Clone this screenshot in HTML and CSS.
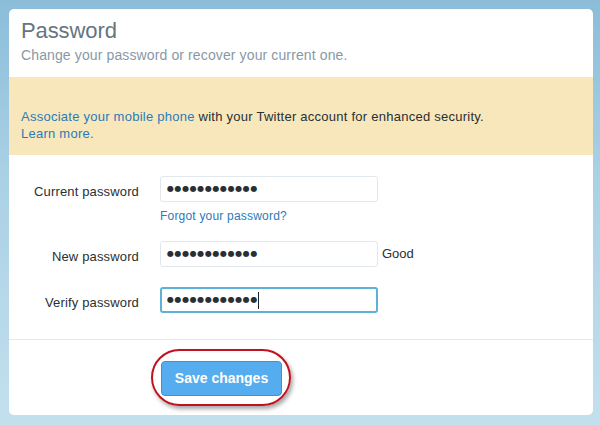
FILE: index.html
```html
<!DOCTYPE html>
<html>
<head>
<meta charset="utf-8">
<link rel="stylesheet" href="styles.css">
</head>
<body>
<div class="card">
  <div class="header">
    <h1 class="title">Password</h1>
    <p class="subtitle">Change your password or recover your current one.</p>
  </div>
  <div class="banner">
    <a class="link" href="#">Associate your mobile phone</a> with your Twitter account for enhanced security.<br>
    <a class="link" href="#">Learn more.</a>
  </div>
  <div class="form">
    <div class="row">
      <label class="label">Current password</label>
      <div class="field">
        <div class="input"><span class="dots">●●●●●●●●●●●●</span></div>
        <a class="link forgot" href="#">Forgot your password?</a>
      </div>
    </div>
    <div class="row row-new">
      <label class="label">New password</label>
      <div class="field inline">
        <div class="input"><span class="dots">●●●●●●●●●●●●</span></div>
        <span class="strength">Good</span>
      </div>
    </div>
    <div class="row row-verify">
      <label class="label">Verify password</label>
      <div class="field">
        <div class="input focus"><span class="dots">●●●●●●●●●●●●</span><span class="caret"></span></div>
      </div>
    </div>
  </div>
  <div class="footer">
    <div class="highlight">
      <button class="btn">Save changes</button>
    </div>
  </div>
</div>
</body>
</html>
```

FILE: styles.css
```css
html, body {
  margin: 0;
  padding: 0;
}
body {
  width: 600px;
  height: 425px;
  background: linear-gradient(to bottom, #8bbdd9 0%, #a9d0e5 40%, #c3e0ee 100%);
  font-family: "Liberation Sans", Arial, sans-serif;
  color: #292f33;
  padding: 9px 7px 10px 9px;
  box-sizing: border-box;
  overflow: hidden;
}
.card {
  width: 584px;
  height: 406px;
  background: #fff;
  border-radius: 5px;
  overflow: hidden;
  display: flex;
  flex-direction: column;
}
.header {
  padding: 9px 12px 13px;
}
.title {
  margin: 0 0 2px;
  font-size: 22px;
  line-height: 26px;
  font-weight: normal;
  color: #66757f;
  letter-spacing: -0.1px;
}
.subtitle {
  margin: 0;
  font-size: 14px;
  line-height: 18px;
  color: #8899a6;
  letter-spacing: 0.12px;
}
.banner {
  background: #f7e7bb;
  padding: 31px 12px 13px;
  font-size: 13px;
  line-height: 17px;
  color: #292f33;
  letter-spacing: 0.25px;
}
.link {
  color: #2b7bb9;
  text-decoration: none;
}
.form {
  padding-top: 21px;
  display: flex;
  flex-direction: column;
}
.row {
  display: flex;
  align-items: flex-start;
}
.row-new {
  margin-top: 17px;
}
.row-verify {
  margin-top: 20px;
}
.label {
  width: 130px;
  height: 26px;
  box-sizing: border-box;
  text-align: right;
  font-size: 13px;
  line-height: 20px;
  padding-top: 6px;
  letter-spacing: 0.15px;
  color: #292f33;
  margin-right: 21px;
  flex: none;
}
.field {
  display: flex;
  flex-direction: column;
}
.field.inline {
  flex-direction: row;
  align-items: center;
}
.input {
  width: 218px;
  height: 26px;
  box-sizing: border-box;
  border: 1px solid #e1e8ed;
  border-radius: 3px;
  display: flex;
  align-items: center;
  padding-left: 6px;
}
.input.focus {
  border: 2px solid #5db1d9;
  padding-left: 5px;
}
.dots {
  font-family: "DejaVu Sans", sans-serif;
  font-size: 8px;
  letter-spacing: 0.6px;
  color: #292f33;
  line-height: 1;
}
.caret {
  width: 1px;
  height: 17px;
  background: #222;
  margin-left: 0;
}
.forgot {
  font-size: 12px;
  line-height: 16px;
  margin-top: 6px;
  letter-spacing: 0.2px;
}
.strength {
  font-size: 13px;
  margin-left: 4px;
  margin-top: -2px;
  color: #292f33;
}
.footer {
  margin-top: 26px;
  border-top: 1px solid #e8e8e8;
  padding-top: 9px;
  padding-left: 142px;
}
.highlight {
  width: 136px;
  height: 53px;
  border: 2px solid #c0121d;
  border-radius: 30px;
  box-shadow: 2px 3px 4px rgba(0, 0, 0, 0.35);
  display: flex;
  align-items: center;
  justify-content: center;
}
.btn {
  width: 121px;
  height: 35px;
  background: #55acee;
  border: 1px solid #3b94d9;
  border-radius: 4px;
  color: #fff;
  font-family: "Liberation Sans", Arial, sans-serif;
  font-size: 14px;
  font-weight: bold;
  padding: 0;
  margin-left: 1px;
  margin-top: 1px;
}
```
